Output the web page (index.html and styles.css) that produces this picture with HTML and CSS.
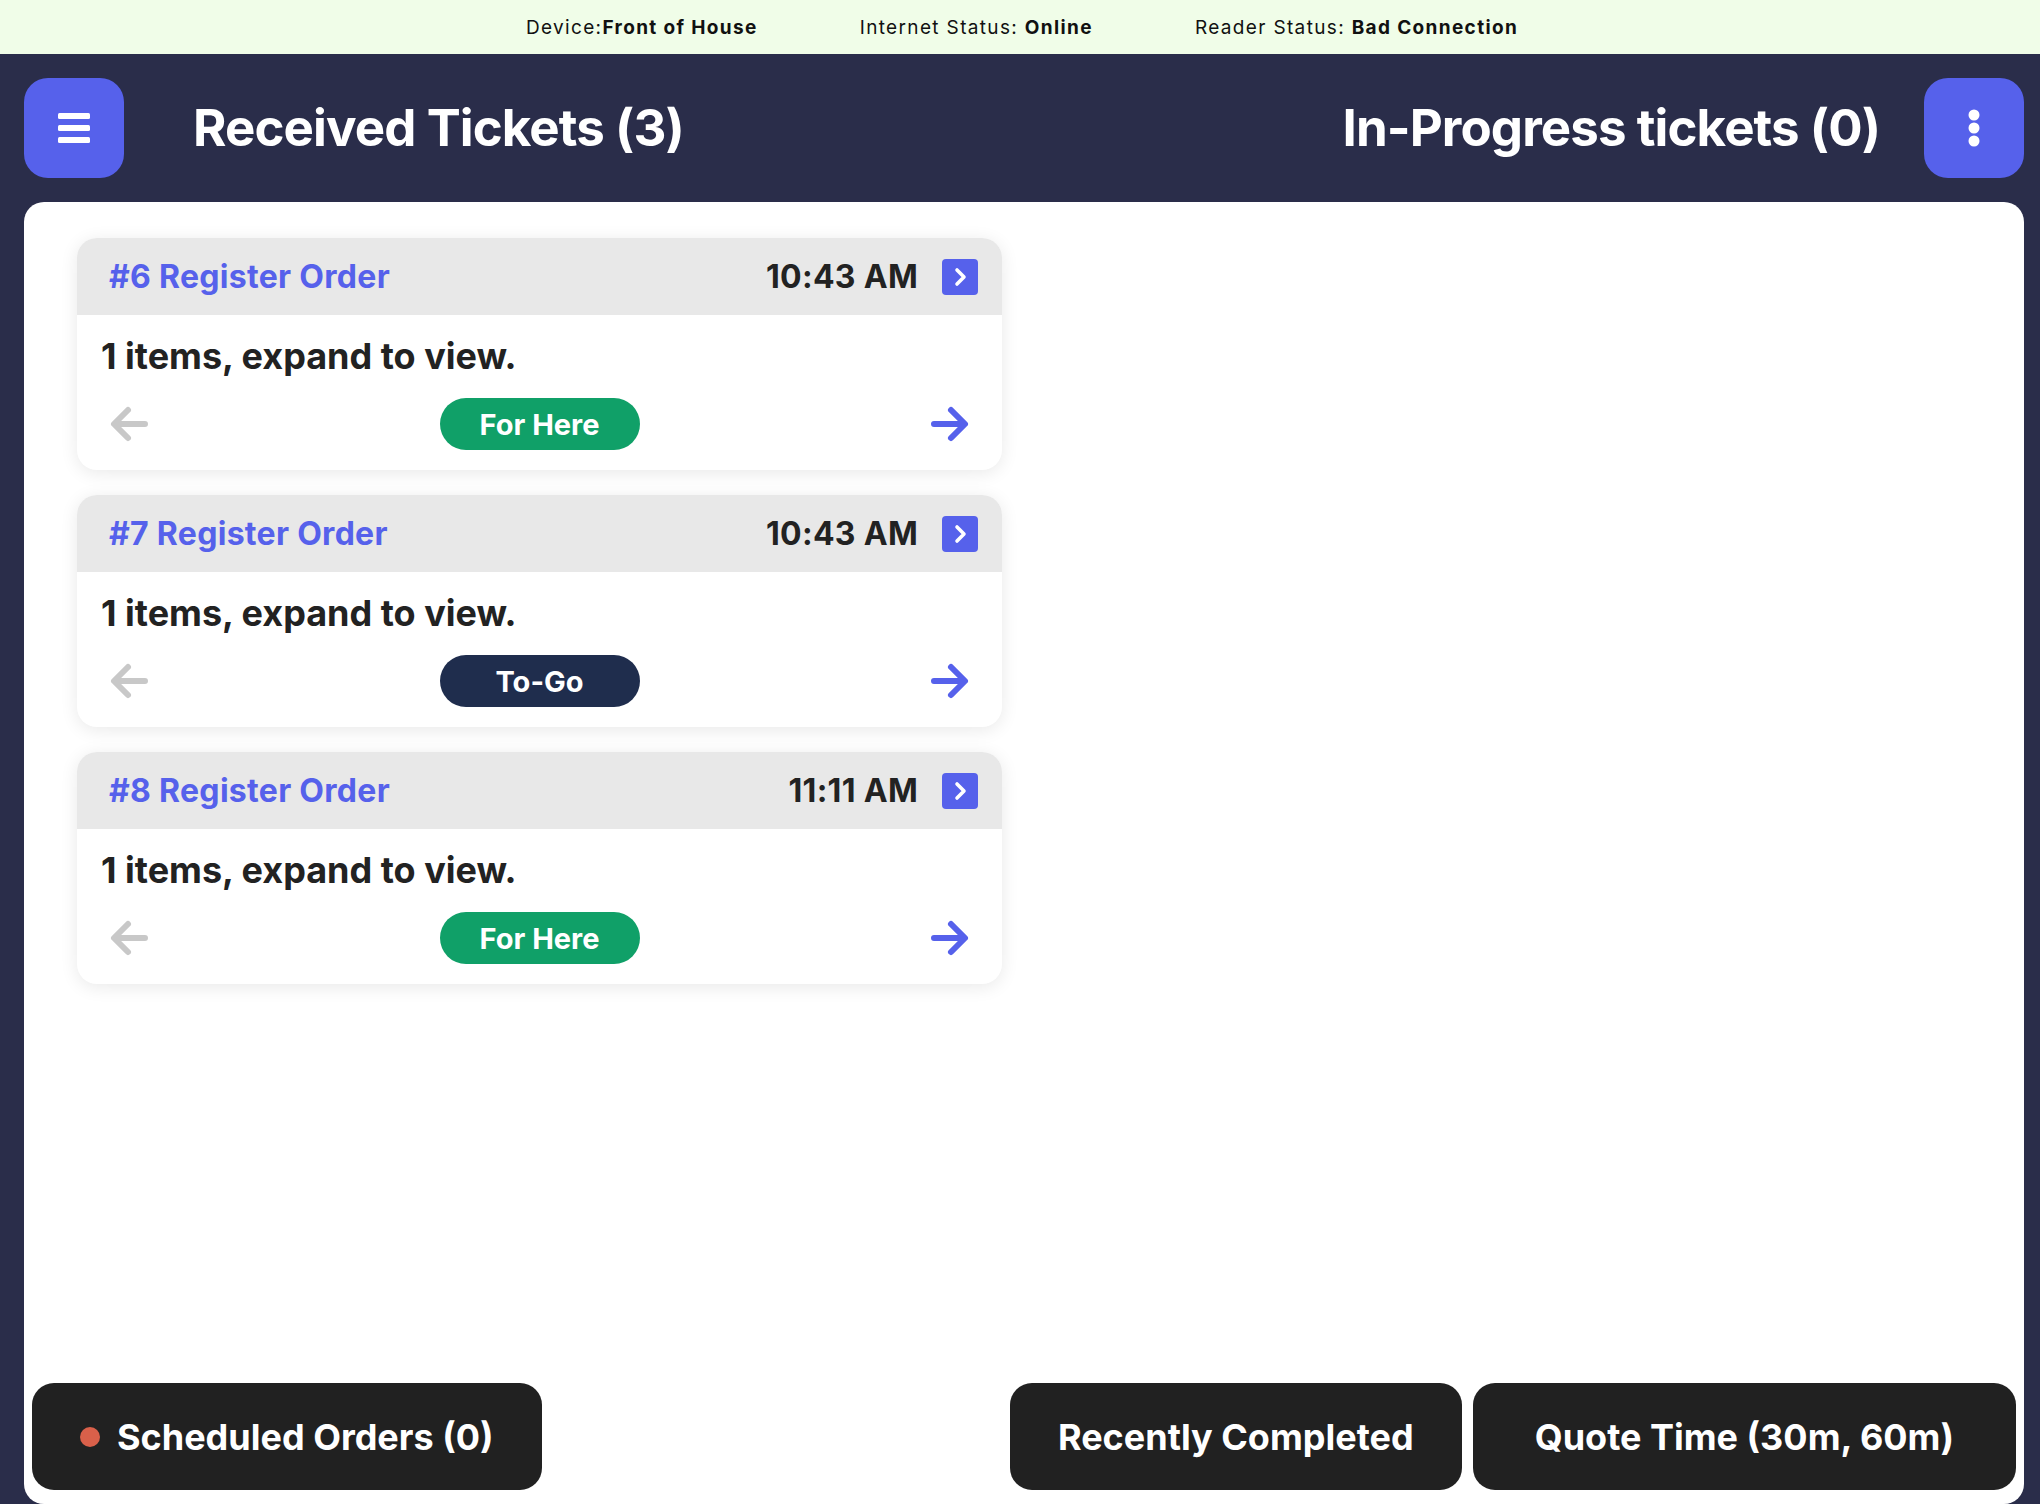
FILE: index.html
```html
<!DOCTYPE html>
<html lang="en">
    <head>
        <meta charset="utf-8">
        <title>Kitchen Display</title>
        <link rel="stylesheet" href="styles.css">
    </head>
    <body>
        <div class="status-bar">
            <span>Device:<b>Front of House</b></span>
            <span>Internet Status: <b>Online</b></span>
            <span>Reader Status: <b>Bad Connection</b></span>
        </div>

        <div class="top-header">
            <button class="square-btn" aria-label="menu">
                <svg width="32" height="30" viewBox="0 0 32 30">
                    <rect x="0" y="0" width="32" height="6" rx="1.5" fill="#fff"/>
                    <rect x="0" y="12" width="32" height="6" rx="1.5" fill="#fff"/>
                    <rect x="0" y="24" width="32" height="6" rx="1.5" fill="#fff"/>
                </svg>
            </button>
            <h1 class="col-title left-title">Received Tickets (3)</h1>
            <div class="spacer"></div>
            <h1 class="col-title right-title">In-Progress tickets (0)</h1>
            <button class="square-btn" aria-label="more">
                <svg width="12" height="38" viewBox="0 0 12 38">
                    <circle cx="6" cy="6" r="5.5" fill="#fff"/>
                    <circle cx="6" cy="19" r="5.5" fill="#fff"/>
                    <circle cx="6" cy="32" r="5.5" fill="#fff"/>
                </svg>
            </button>
        </div>

        <div class="panel">
            <div class="ticket-list">

                <div class="ticket">
                    <div class="ticket-head">
                        <span class="ticket-name">#6 Register Order</span>
                        <span class="ticket-time">10:43 AM</span>
                        <span class="open-btn">
                            <svg width="36" height="36" viewBox="0 0 36 36"><path d="M15 11 L22 18 L15 25" fill="none" stroke="#fff" stroke-width="3.6" stroke-linecap="round" stroke-linejoin="round"/></svg>
                        </span>
                    </div>
                    <div class="ticket-body">
                        <div class="ticket-items">1 items, expand to view.</div>
                        <div class="ticket-row">
                            <svg class="arrow" width="40" height="40" viewBox="0 0 40 40"><path d="M36 20 H6 M19 6 L5 20 L19 34" fill="none" stroke="#c8c8c8" stroke-width="6" stroke-linecap="round" stroke-linejoin="round"/></svg>
                            <span class="pill here">For Here</span>
                            <svg class="arrow" width="40" height="40" viewBox="0 0 40 40"><path d="M4 20 H34 M21 6 L35 20 L21 34" fill="none" stroke="#5661eb" stroke-width="6" stroke-linecap="round" stroke-linejoin="round"/></svg>
                        </div>
                    </div>
                </div>

                <div class="ticket">
                    <div class="ticket-head">
                        <span class="ticket-name">#7 Register Order</span>
                        <span class="ticket-time">10:43 AM</span>
                        <span class="open-btn">
                            <svg width="36" height="36" viewBox="0 0 36 36"><path d="M15 11 L22 18 L15 25" fill="none" stroke="#fff" stroke-width="3.6" stroke-linecap="round" stroke-linejoin="round"/></svg>
                        </span>
                    </div>
                    <div class="ticket-body">
                        <div class="ticket-items">1 items, expand to view.</div>
                        <div class="ticket-row">
                            <svg class="arrow" width="40" height="40" viewBox="0 0 40 40"><path d="M36 20 H6 M19 6 L5 20 L19 34" fill="none" stroke="#c8c8c8" stroke-width="6" stroke-linecap="round" stroke-linejoin="round"/></svg>
                            <span class="pill togo">To-Go</span>
                            <svg class="arrow" width="40" height="40" viewBox="0 0 40 40"><path d="M4 20 H34 M21 6 L35 20 L21 34" fill="none" stroke="#5661eb" stroke-width="6" stroke-linecap="round" stroke-linejoin="round"/></svg>
                        </div>
                    </div>
                </div>

                <div class="ticket">
                    <div class="ticket-head">
                        <span class="ticket-name">#8 Register Order</span>
                        <span class="ticket-time">11:11 AM</span>
                        <span class="open-btn">
                            <svg width="36" height="36" viewBox="0 0 36 36"><path d="M15 11 L22 18 L15 25" fill="none" stroke="#fff" stroke-width="3.6" stroke-linecap="round" stroke-linejoin="round"/></svg>
                        </span>
                    </div>
                    <div class="ticket-body">
                        <div class="ticket-items">1 items, expand to view.</div>
                        <div class="ticket-row">
                            <svg class="arrow" width="40" height="40" viewBox="0 0 40 40"><path d="M36 20 H6 M19 6 L5 20 L19 34" fill="none" stroke="#c8c8c8" stroke-width="6" stroke-linecap="round" stroke-linejoin="round"/></svg>
                            <span class="pill here">For Here</span>
                            <svg class="arrow" width="40" height="40" viewBox="0 0 40 40"><path d="M4 20 H34 M21 6 L35 20 L21 34" fill="none" stroke="#5661eb" stroke-width="6" stroke-linecap="round" stroke-linejoin="round"/></svg>
                        </div>
                    </div>
                </div>

            </div>

            <div class="bottom-bar">
                <button class="dark-btn"><span class="dot"></span>Scheduled Orders (0)</button>
                <div class="spacer"></div>
                <button class="dark-btn">Recently Completed</button>
                <button class="dark-btn wide">Quote Time (30m, 60m)</button>
            </div>
        </div>
    </body>
</html>
```

FILE: styles.css
```css
html, body {
    margin: 0;
    height: 100%;
}
body {
    background: #2a2d4a;
    font-family: Inter, "Noto Sans", sans-serif;
    display: flex;
    flex-direction: column;
    overflow: hidden;
}
.spacer { flex: 1; }

/* status strip */
.status-bar {
    height: 54px;
    flex: none;
    background: #f0fde8;
    display: flex;
    justify-content: center;
    align-items: center;
    gap: 102px;
    font-size: 19px;
    letter-spacing: 1.35px;
    color: #111;
    padding-left: 4px;
}
.status-bar b { font-weight: 700; }

/* header */
.top-header {
    flex: none;
    height: 148px;
    box-sizing: border-box;
    display: flex;
    align-items: center;
    padding: 0 16px 1px 24px;
}
.square-btn {
    width: 100px;
    height: 100px;
    border: none;
    border-radius: 24px;
    background: #5661eb;
    display: flex;
    align-items: center;
    justify-content: center;
    padding: 0;
}
.col-title {
    margin: 0;
    color: #fff;
    font-size: 51px;
    font-weight: 700;
    letter-spacing: -0.9px;
}
.left-title { margin-left: 69px; }
.right-title { margin-right: 44px; }

/* main panel */
.panel {
    flex: 1;
    margin: 0 16px 0 24px;
    background: #fff;
    border-radius: 20px;
    display: flex;
    flex-direction: column;
}
.ticket-list {
    flex: 1;
    width: 925px;
    padding: 36px 0 0 53px;
    display: flex;
    flex-direction: column;
    gap: 25px;
}
.ticket {
    border-radius: 20px;
    overflow: hidden;
    background: #fff;
    box-shadow: 0 3px 18px rgba(0,0,0,0.09);
}
.ticket-head {
    height: 77px;
    background: #e8e8e8;
    display: flex;
    align-items: center;
    padding: 0 24px 0 32px;
    font-size: 32px;
    font-weight: 700;
    letter-spacing: 0.3px;
}
.ticket-name {
    color: #5661eb;
    flex: 1;
}
.ticket-time {
    color: #222;
    margin-right: 24px;
}
.open-btn {
    width: 36px;
    height: 36px;
    border-radius: 4px;
    background: #5661eb;
    display: flex;
}
.ticket-body {
    padding: 19px 24px 20px;
}
.ticket-items {
    font-size: 36px;
    font-weight: 700;
    line-height: 44px;
    color: #222;
}
.ticket-row {
    margin: 20px 8px 0 8px;
    display: flex;
    align-items: center;
    justify-content: space-between;
}
.pill {
    width: 200px;
    height: 52px;
    border-radius: 26px;
    display: flex;
    align-items: center;
    justify-content: center;
    color: #fff;
    font-size: 29px;
    font-weight: 700;
}
.here { background: #10a068; }
.togo { background: #1f2d4d; }

/* bottom buttons */
.bottom-bar {
    display: flex;
    gap: 11px;
    padding: 0 8px 14px;
}
.dark-btn {
    height: 107px;
    border: none;
    border-radius: 22px;
    background: #212121;
    color: #fff;
    font-family: Inter, "Noto Sans", sans-serif;
    font-size: 36px;
    font-weight: 700;
    padding: 0 48px;
    display: flex;
    align-items: center;
}
.dark-btn.wide { padding: 0 62px; }
.dot {
    width: 20px;
    height: 20px;
    border-radius: 50%;
    background: #d9604a;
    margin-right: 17px;
}
```
